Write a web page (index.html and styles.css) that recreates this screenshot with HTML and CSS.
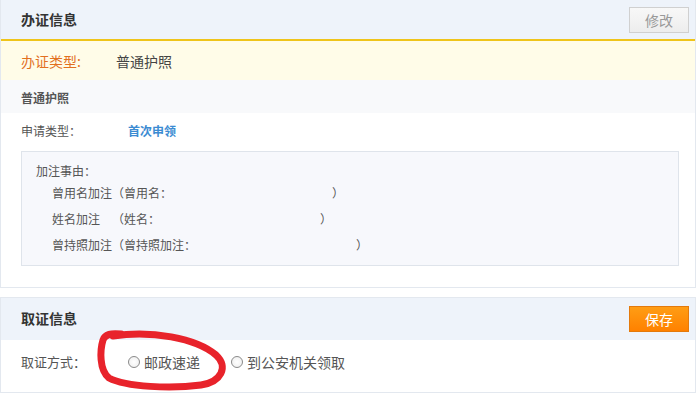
FILE: index.html
```html
<!DOCTYPE html>
<html lang="zh-CN">
<head>
    <meta charset="UTF-8">
    <title>办证信息</title>
    <link rel="stylesheet" href="styles.css">
</head>
<body>
    <!-- 办证信息 -->
    <div class="panel">
        <div class="panel-head">
            <h2>办证信息</h2>
            <button class="btn btn-gray">修改</button>
        </div>
        <div class="type-row">
            <span class="type-label">办证类型:</span>
            <span>普通护照</span>
        </div>
        <div class="sub-head">普通护照</div>
        <div class="panel-body">
            <div class="field-row">
                <span class="field-label">申请类型：</span>
                <span class="field-blue">首次申领</span>
            </div>
            <div class="note-box">
                <div class="note-title">加注事由：</div>
                <div class="note-line">曾用名加注（曾用名：<span class="blank"></span>）</div>
                <div class="note-line">姓名加注　（姓名：<span class="blank"></span>）</div>
                <div class="note-line">曾持照加注（曾持照加注：<span class="blank"></span>）</div>
            </div>
        </div>
    </div>

    <!-- 取证信息 -->
    <div class="panel panel-pickup">
        <div class="panel-head panel-head-tall">
            <h2>取证信息</h2>
            <button class="btn btn-orange">保存</button>
        </div>
        <div class="pickup-row">
            <span class="pickup-label">取证方式：</span>
            <label class="radio-opt"><span class="radio"></span>邮政速递</label>
            <label class="radio-opt"><span class="radio"></span>到公安机关领取</label>
        </div>
        <svg class="mark" width="140" height="70" viewBox="0 0 140 70">
            <path d="M 22 11 C 60 5, 105 13, 125 30 C 138 42, 130 57, 110 60 C 80 64, 35 62, 18 53 C 8 45, 9 25, 12 15 C 14 9, 20 8, 30 9"
                  fill="none" stroke="#e8232b" stroke-width="7" stroke-linecap="round" stroke-linejoin="round"/>
        </svg>
    </div>
</body>
</html>
```

FILE: styles.css
```css
body {
    margin: 0;
    font-family: "Noto Sans CJK SC", "Microsoft YaHei", sans-serif;
    font-size: 12px;
    color: #333;
    background: #fff;
    text-spacing-trim: space-all;
}

.panel {
    width: 696px;
    box-sizing: border-box;
    border: 1px solid #e3e8ef;
    border-top: none;
}

.panel-head {
    display: flex;
    align-items: center;
    justify-content: space-between;
    height: 39px;
    padding: 0 6px 0 20px;
    background: #eef3fa;
}

.panel-head h2 {
    margin: 0 0 2px;
    font-size: 14px;
    font-weight: bold;
    color: #333;
}

.btn {
    width: 60px;
    height: 26px;
    padding: 0;
    font-family: inherit;
    font-size: 14px;
    border: 1px solid;
    border-radius: 0;
    cursor: pointer;
}

.btn-gray {
    background: linear-gradient(#f8f8f8, #ededed);
    border-color: #d0d0d0;
    color: #999;
}

.btn-orange {
    background: linear-gradient(#ff9d14, #ff8100);
    border-color: #e47a0c;
    color: #fff;
}

.type-row {
    display: flex;
    align-items: center;
    height: 39px;
    padding-left: 20px;
    border-top: 2px solid #efc41a;
    background: #fffce8;
    font-size: 14px;
    color: #444;
}

.type-label {
    width: 95px;
    color: #e2701f;
}

.sub-head {
    height: 33px;
    line-height: 35px;
    padding-left: 20px;
    background: #f8f9fb;
    font-weight: bold;
    color: #555;
}

.panel-body {
    padding: 8px 16px 21px 20px;
}

.field-row {
    display: flex;
    line-height: 20px;
    margin-bottom: 10px;
}

.field-label {
    width: 107px;
    color: #555;
}

.field-blue {
    color: #3b8bd2;
    font-weight: bold;
}

.note-box {
    padding: 10px 14px 7px;
    border: 1px solid #dfe4eb;
    background: #f7f8fc;
    color: #555;
}

.note-title {
    line-height: 18px;
}

.note-line {
    padding-left: 16px;
    line-height: 26px;
}

.blank {
    display: inline-block;
    width: 160px;
}

.panel-pickup {
    position: relative;
    margin-top: 9px;
    border-top: 1px solid #e3e8ef;
}

.panel-head-tall {
    height: 42px;
}

.pickup-row {
    display: flex;
    align-items: center;
    padding: 12px 20px 20px;
    line-height: 20px;
    font-size: 14px;
    color: #555;
}

.pickup-label {
    width: 107px;
    font-size: 13px;
}

.radio-opt {
    display: inline-flex;
    align-items: center;
    margin-right: 31px;
}

.radio-opt:last-child {
    margin-right: 0;
}

.radio {
    width: 12px;
    height: 12px;
    margin-right: 4px;
    box-sizing: border-box;
    border: 1px solid #8a8a8a;
    border-radius: 50%;
    background: radial-gradient(#fff, #ececec);
}

.mark {
    position: absolute;
    left: 90px;
    top: 27px;
}
```
